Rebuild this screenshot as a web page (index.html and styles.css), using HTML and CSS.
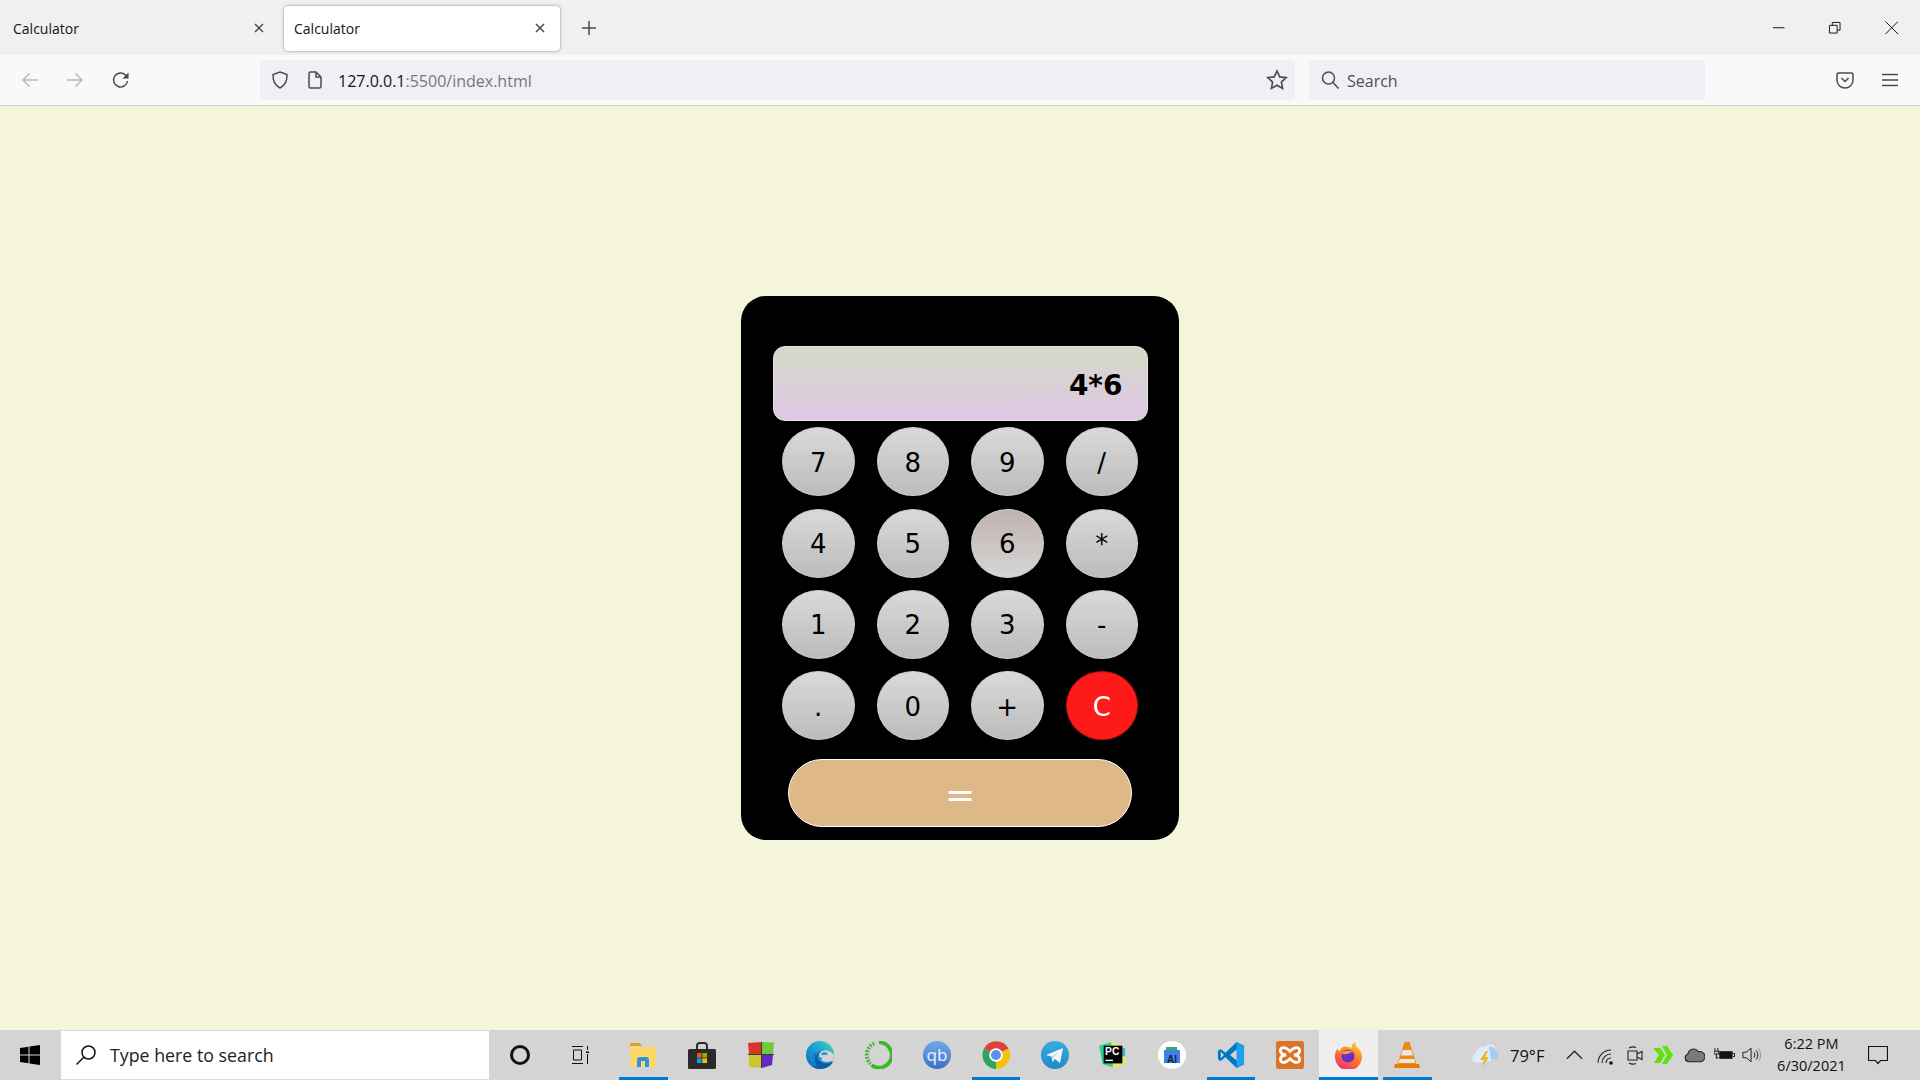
FILE: index.html
```html
<!DOCTYPE html>
<html lang="en">
<head>
  <meta charset="UTF-8">
  <meta name="viewport" content="width=device-width, initial-scale=1.0">
  <title>Calculator</title>
  <link rel="stylesheet" href="styles.css">
</head>
<body>
  <div class="tabbar">
    <div class="tab">
      <span class="tab-title">Calculator</span>
      <svg class="tab-close" viewBox="0 0 12 12"><path d="M2 2l8 8M10 2l-8 8"/></svg>
    </div>
    <div class="tab active">
      <span class="tab-title">Calculator</span>
      <svg class="tab-close" viewBox="0 0 12 12"><path d="M2 2l8 8M10 2l-8 8"/></svg>
    </div>
    <svg class="new-tab" viewBox="0 0 16 16"><path d="M8 1v14M1 8h14"/></svg>
    <div class="window-controls">
      <svg viewBox="0 0 14 14"><path d="M1 7h12"/></svg>
      <svg viewBox="0 0 14 14"><path d="M1.5 4.5h8v8h-8zM4.5 4.5v-3h8v8h-3"/></svg>
      <svg viewBox="0 0 14 14"><path d="M.5.5l13 13M13.5.5l-13 13"/></svg>
    </div>
  </div>

  <div class="toolbar">
    <div class="nav-btn faded"><svg viewBox="0 0 20 20"><path d="M18 10H3M9.5 3.5L3 10l6.500 6.500"/></svg></div>
    <div class="nav-btn faded"><svg viewBox="0 0 20 20"><path d="M2 10h15M10.500 3.500L17 10l-6.500 6.500"/></svg></div>
    <div class="nav-btn reload"><svg viewBox="0 0 20 20"><path d="M16.500 11a7 7 0 1 1-2-6l2.500 2.500"/><path class="solid" d="M17.500 2.500v6h-6z"/></svg></div>
    <div class="urlbar">
      <svg class="shield" viewBox="0 0 20 20"><path d="M10 2l7 2.500c.3 6.500-2 11-7 13.500-5-2.500-7.300-7-7-13.500z"/></svg>
      <svg class="page-icon" viewBox="0 0 16 20"><path d="M2 3.500A1.500 1.500 0 0 1 3.500 2H9l5 5v9.500a1.500 1.500 0 0 1-1.500 1.500h-9A1.500 1.500 0 0 1 2 16.500zM9 2v5h5"/></svg>
      <span class="url"><span class="url-host">127.0.0.1</span>:5500/index.html</span>
      <svg class="star" viewBox="0 0 20 20"><path d="M10 1.800l2.500 5.400 5.800.7-4.300 4 1.100 5.800-5.100-2.900-5.100 2.900 1.100-5.800-4.300-4 5.800-.7z"/></svg>
    </div>
    <div class="searchbar">
      <svg class="search-icon" viewBox="0 0 20 20"><circle cx="8.500" cy="8" r="6"/><path d="M13 12.500l5.500 6"/></svg>
      <span>Search</span>
    </div>
    <svg class="pocket" viewBox="0 0 20 20"><path d="M2 4.500A1.500 1.500 0 0 1 3.500 3h13A1.500 1.500 0 0 1 18 4.500V10a8 8 0 0 1-16 0z"/><path d="M6.500 8l3.500 3.500L13.500 8"/></svg>
    <svg class="menu" viewBox="0 0 18 16"><path d="M1 2.500h16M1 8h16M1 13.500h16"/></svg>
  </div>

  <div class="page">
    <div class="calculator">
      <div class="display">4*6</div>
      <div class="keys">
        <button class="key">7</button>
        <button class="key">8</button>
        <button class="key">9</button>
        <button class="key">/</button>
        <button class="key">4</button>
        <button class="key">5</button>
        <button class="key hover">6</button>
        <button class="key">*</button>
        <button class="key">1</button>
        <button class="key">2</button>
        <button class="key">3</button>
        <button class="key">-</button>
        <button class="key">.</button>
        <button class="key">0</button>
        <button class="key">+</button>
        <button class="key clear">C</button>
      </div>
      <button class="equals">=</button>
    </div>
  </div>

  <div class="taskbar">
    <div class="start">
      <svg viewBox="0 0 20 20"><path d="M0 3l8.500-1.200V9.500H0zM9.500 1.600L20 0v9.500H9.500zM0 10.500h8.500v7.700L0 17zM9.500 10.500H20V20L9.500 18.400z"/></svg>
    </div>
    <div class="task-search">
      <svg viewBox="0 0 22 22"><circle cx="13.500" cy="8.500" r="6.500"/><path d="M8.800 13.200L1.500 20.500"/></svg>
      <span>Type here to search</span>
    </div>
    <div class="cortana"><div class="cortana-ring"></div></div>
    <div class="taskview">
      <svg viewBox="0 0 20 20"><path d="M2 1.500h11M2 18.500h11M3.500 5h8v10h-8zM17.500 1v4M17.500 9v10"/><path class="dot" d="M17.500 6.500v1.500"/></svg>
    </div>

    <div class="apps">
      <div class="app running">
        <svg viewBox="0 0 28 28">
          <path d="M1 3.500A1.500 1.500 0 0 1 2.500 2h8l3 3H1z" fill="#e0a30e"/>
          <path d="M1 6h26v19a1 1 0 0 1-1 1H2a1 1 0 0 1-1-1z" fill="#fdd868"/>
          <path d="M8 26v-7a3 3 0 0 1 3-3h6a3 3 0 0 1 3 3v7h-4v-6h-4v6z" fill="#2f94dc"/>
        </svg>
      </div>
      <div class="app">
        <svg viewBox="0 0 28 28">
          <path d="M9 9V5a3 3 0 0 1 3-3h4a3 3 0 0 1 3 3v4" fill="none" stroke="#2b2b2b" stroke-width="2"/>
          <rect x="0" y="8" width="28" height="20" rx="1.500" fill="#2b2b2b"/>
          <rect x="9" y="12" width="4.600" height="4.600" fill="#f25022"/>
          <rect x="14.400" y="12" width="4.600" height="4.600" fill="#7fba00"/>
          <rect x="9" y="17.400" width="4.600" height="4.600" fill="#00a4ef"/>
          <rect x="14.400" y="17.400" width="4.600" height="4.600" fill="#ffb900"/>
        </svg>
      </div>
      <div class="app">
        <svg viewBox="0 0 28 28">
          <path d="M1 2l13-1v12H2z" fill="#d8362a"/>
          <path d="M15 1l12 .5-1 12H15z" fill="#6ecb3c"/>
          <path d="M2 14h12v13l-12-1z" fill="#c8c832"/>
          <path d="M15 14h11l-1 10-10 3z" fill="#6428c8"/>
          <path d="M14 1h1v26h-1zM1 13h26v1H1z" fill="#3a3a32"/>
        </svg>
      </div>
      <div class="app">
        <svg viewBox="0 0 30 30">
          <defs>
            <linearGradient id="edge-top" x1="0" y1="1" x2="1" y2="0">
              <stop offset="0" stop-color="#0c66c2"/>
              <stop offset=".6" stop-color="#1fa8d8"/>
              <stop offset="1" stop-color="#4fdf90"/>
            </linearGradient>
          </defs>
          <circle cx="15" cy="15" r="15" fill="url(#edge-top)"/>
          <path d="M30 17c-1-5-5-7-10-7-6 0-8 3-8 6 0 5 5 8 10 8 3 0 5-1 7-2-2 5-8 8-14 8-3 0-6-1-8-3 2 1 4 0 5-1-3-3-4-9 0-13-2 0-3 1-4 2" fill="#0f5aa8"/>
          <path d="M30 15.500c-1-3-5-5.500-9-5.500-4 0-7 2-7 5 0 2 1 3 3 3 1 1 0 2-1 2 3 3 9 3 13 .5z" fill="#d4d4d4"/>
          <path d="M16 14c1-2 5-3 7-1 1 1 0 2-3 2h-3z" fill="#1e9fd8"/>
        </svg>
      </div>
      <div class="app">
        <svg viewBox="0 0 30 30">
          <path d="M16 1.500a13.500 13.500 0 1 1-8 24.300" fill="none" stroke="#3fb52d" stroke-width="4"/>
          <path d="M11 2.500a13.500 13.500 0 0 0-4 22" fill="none" stroke="#3fb52d" stroke-width="4" stroke-dasharray="2 1.500"/>
        </svg>
      </div>
      <div class="app">
        <svg viewBox="0 0 28 28">
          <defs>
            <linearGradient id="qb-fill" x1="0" y1="0" x2="0" y2="1">
              <stop offset="0" stop-color="#73a8ec"/>
              <stop offset="1" stop-color="#3a70c8"/>
            </linearGradient>
          </defs>
          <circle cx="14" cy="14" r="14" fill="url(#qb-fill)"/>
          <text class="qb-text" x="14" y="19.500" text-anchor="middle">qb</text>
        </svg>
      </div>
      <div class="app running">
        <svg viewBox="0 0 28 28">
          <path d="M14 14L2 7.500A14 14 0 0 1 26.500 7.500z" fill="#db4437"/>
          <path d="M14 14l12.500-6.500A14 14 0 0 1 14 28z" fill="#f4c20d"/>
          <path d="M14 14v14A14 14 0 0 1 2 7.500z" fill="#2fa45c"/>
          <circle cx="14" cy="14" r="6.800" fill="#fff"/>
          <circle cx="14" cy="14" r="5" fill="#5b8ff0"/>
        </svg>
      </div>
      <div class="app">
        <svg viewBox="0 0 28 28">
          <defs>
            <linearGradient id="tg-fill" x1="0" y1="0" x2="0" y2="1">
              <stop offset="0" stop-color="#37aee2"/>
              <stop offset="1" stop-color="#1e88c8"/>
            </linearGradient>
          </defs>
          <circle cx="14" cy="14" r="14" fill="url(#tg-fill)"/>
          <path d="M5 14l17-7-3 15-5-4-2.500 3-1-5.500z" fill="#f2f7fb"/>
          <path d="M10.500 15.500l8-5-6 6-.5 3.500z" fill="#c4dcec"/>
        </svg>
      </div>
      <div class="app">
        <svg viewBox="0 0 30 30">
          <path d="M0 5l13-4 2 27-11-3z" fill="#2ed48c"/>
          <path d="M14 1l12 5 3 18-14 5z" fill="#e8ee50"/>
          <path d="M22 5l6 3v8l-6 1z" fill="#30b8e0"/>
          <rect x="5" y="5" width="20" height="19" fill="#000"/>
          <text class="pc-text" x="6.500" y="15.500">PC</text>
          <rect x="7" y="20" width="8" height="1.500" fill="#fff"/>
        </svg>
      </div>
      <div class="app">
        <svg viewBox="0 0 28 28">
          <circle cx="14" cy="14" r="14" fill="#fff"/>
          <path d="M8 6h11v4H8z" fill="#3aa870"/>
          <path d="M6 9h16v13H6z" fill="#3f80e8"/>
          <text class="ai-text" x="14" y="21.500" text-anchor="middle">AI</text>
        </svg>
      </div>
      <div class="app running">
        <svg viewBox="0 0 30 30">
          <path d="M21 1l8 4v20l-8 4-12-11.500-5 4-3-2v-9l3-2 5 4z" fill="#0078c8"/>
          <path d="M21 1l8 4v20l-8 4z" fill="#22a0ea"/>
          <path d="M21 9l-7 6 7 6z" fill="#d4d4d4"/>
          <path d="M4 11.500L7.500 15 4 18.500z" fill="#d4d4d4"/>
        </svg>
      </div>
      <div class="app">
        <svg viewBox="0 0 30 30">
          <rect width="30" height="30" rx="3" fill="#dc7428"/>
          <path d="M8 7c3 0 5 2 7 4 2-2 4-4 7-4s4 3 3 5-3 3-6 3c3 0 5 1 6 3s0 5-3 5-5-2-7-4c-2 2-4 4-7 4s-4-3-3-5 3-3 6-3c-3 0-5-1-6-3s0-5 3-5z" fill="none" stroke="#fff" stroke-width="3"/>
        </svg>
      </div>
      <div class="app running active">
        <svg viewBox="0 0 30 30">
          <defs>
            <linearGradient id="ff-body" x1=".8" y1="0" x2=".3" y2="1">
              <stop offset="0" stop-color="#ffd430"/>
              <stop offset=".5" stop-color="#ff7a20"/>
              <stop offset="1" stop-color="#f0307a"/>
            </linearGradient>
          </defs>
          <path d="M22 1c2 3 1 4 3 6 3 3 5 6 5 10a14.500 14.500 0 0 1-29 0c0-4 1-7 3-9 0 2 1 3 2 3 1-3 4-5 6-5 4 0 5 1 7 2-1-3 1-5 3-7z" fill="url(#ff-body)"/>
          <circle cx="15" cy="16" r="7" fill="#6a30c8"/>
          <path d="M8 13c3-3 9-4 13-1-2 0-4 0-5 1.500-3 1-6 1-8-.5z" fill="#ff9a30"/>
        </svg>
      </div>
      <div class="app running">
        <svg viewBox="0 0 26 28">
          <path d="M10.500 1h5l7 22h-19z" fill="#f08a10"/>
          <path d="M8.700 9h8.600l1.600 5.500H7z" fill="#e8e8e8"/>
          <path d="M5.800 18h14.400l1.200 4H4.600z" fill="#e8e8e8"/>
          <path d="M1 23h24l1 3a1 1 0 0 1-1 1H1a1 1 0 0 1-1-1z" fill="#e87c08"/>
        </svg>
      </div>
    </div>

    <div class="tray">
      <svg class="tray-weather" viewBox="0 0 28 26">
        <path d="M6 21a5 5 0 0 1-1-9.800 7 7 0 0 1 9-6 6 6 0 0 1 11 3.500 5 5 0 0 1-2 9.300z" fill="#dcecfa"/>
        <path d="M18 5a6 6 0 0 1 7 3.500 5 5 0 0 1-2 9.300h-3z" fill="#a8ccf0"/>
        <path d="M15 9l-6 9h4l-2 7 7-10h-4l3-6z" fill="#f4b020"/>
      </svg>
      <span class="tray-temp">79°F</span>
      <svg class="tray-caret" viewBox="0 0 18 10"><path d="M1 9l8-8 8 8"/></svg>
      <svg class="tray-icon tray-wifi" viewBox="0 0 20 20"><path d="M3 18a13 13 0 0 1 13-13M7 18a9 9 0 0 1 9-9M11 18a5 5 0 0 1 5-5"/><circle class="dot-fill" cx="16" cy="18" r="1.800"/></svg>
      <svg class="tray-icon tray-meet" viewBox="0 0 20 20"><path d="M3 6h9v9H3zM12 9l5-2.500v8L12 12zM4 3a8 8 0 0 1 7-.5M4 18a8 8 0 0 0 7 .5"/></svg>
      <svg class="tray-icon tray-chevrons" viewBox="0 0 20 20"><path class="chevrons" d="M0 3h7l5 7-5 8H1l5-8zM9 1h5l6 9-6 9H9l5-9z"/></svg>
      <svg class="tray-icon tray-cloud" viewBox="0 0 22 16"><path d="M5 15a4 4 0 0 1-1-7.800A6 6 0 0 1 15 4.500 5 5 0 0 1 18 15z"/></svg>
      <svg class="tray-icon tray-battery" viewBox="0 0 22 16"><path d="M1 1v3M4 1v3M0 4h5v3H0zM2.500 7v4h2"/><rect class="dot-fill" x="5.500" y="4" width="14" height="8"/><path d="M20 6.500h1.500v3H20"/></svg>
      <svg class="tray-icon tray-sound" viewBox="0 0 22 20"><path d="M1 7h3.500L10 2.500v15L4.500 13H1zM13 7a4.500 4.500 0 0 1 0 6M15.500 5a8 8 0 0 1 0 10"/><path class="wave" d="M18 3a11 11 0 0 1 0 14"/></svg>
      <div class="clock">
        <span>6:22 PM</span>
        <span>6/30/2021</span>
      </div>
      <svg class="tray-note" viewBox="0 0 20 20"><path d="M.5 1.500h19v14h-7l-2.500 3-2.500-3h-7z"/></svg>
    </div>
  </div>
</body>
</html>
```

FILE: styles.css
```css
* {
  box-sizing: border-box;
}

body {
  margin: 0;
  height: 1080px;
  overflow: hidden;
  display: flex;
  flex-direction: column;
  background-color: beige;
  font-family: "Open Sans", "Noto Sans", sans-serif;
  color: #15141a;
}

svg {
  display: block;
  flex-shrink: 0;
}

.tabbar svg,
.toolbar svg {
  fill: none;
  stroke: #4a4a50;
  stroke-width: 1.5;
}

/* browser tabs */
.tabbar {
  height: 55px;
  display: flex;
  align-items: center;
  background-color: #f0f0f0;
}

.tab {
  width: 284px;
  height: 45px;
  margin-top: 1px;
  padding: 0 19px 0 13px;
  display: flex;
  align-items: center;
  justify-content: space-between;
  font-size: 14px;
}

.tab.active {
  width: 276px;
  padding: 0 14px 0 10px;
  border-radius: 4px;
  background-color: white;
  box-shadow: 0 0 3px rgba(0, 0, 0, 0.45);
}

.tab-close {
  width: 12px;
  height: 12px;
}

.new-tab {
  width: 16px;
  height: 16px;
  margin-left: 20.500px;
}

.window-controls {
  margin-left: auto;
  margin-right: 22px;
  display: flex;
  gap: 43px;

  svg {
    width: 13.500px;
    height: 13.500px;
    stroke: #111;
    stroke-width: 1;
  }
}

/* address bar row */
.toolbar {
  height: 51px;
  padding: 0 0 1px 7px;
  display: flex;
  align-items: center;
  background-color: #f9f9fb;
  border-bottom: 1px solid #d4d4cc;
}

.nav-btn {
  width: 45px;
  display: flex;
  justify-content: center;

  svg {
    width: 20px;
    height: 20px;
  }
  .solid {
    fill: #4a4a50;
    stroke: none;
  }
}

.nav-btn.faded svg {
  stroke: #b8b8bc;
}

.nav-btn.reload {
  margin-left: 1px;
}

.urlbar {
  width: 1035px;
  height: 40px;
  margin-left: 117px;
  padding: 0 7px 0 10px;
  display: flex;
  align-items: center;
  border-radius: 4px;
  background-color: #f0f0f4;
}

.shield {
  width: 20px;
  height: 20px;
}

.page-icon {
  width: 16px;
  height: 20px;
  margin-left: 17px;
}

.url {
  margin-left: 15px;
  padding-top: 2px;
  font-size: 16px;
  color: #77767d;
}

.url-host {
  color: #15141a;
}

.star {
  width: 22px;
  height: 22px;
  margin-left: auto;
}

.searchbar {
  width: 396px;
  height: 40px;
  margin-left: 14px;
  padding-left: 11px;
  display: flex;
  align-items: center;
  gap: 7px;
  border-radius: 4px;
  background-color: #f0f0f4;
  font-size: 16px;
  color: #4f4e55;

  span {
    padding-top: 2px;
  }
}

.search-icon {
  width: 20px;
  height: 20px;
}

.pocket {
  width: 20px;
  height: 20px;
  margin-left: 130px;
}

.menu {
  width: 18px;
  height: 16px;
  margin-left: 26px;
}

/* the calculator */
.page {
  flex: 1;
  display: flex;
  align-items: center;
  justify-content: center;
}

.calculator {
  width: 438px;
  padding: 50px 0 13px;
  display: flex;
  flex-direction: column;
  align-items: center;
  border-radius: 25px;
  background-color: black;
  font-family: "DejaVu Sans", Verdana, sans-serif;
}

.display {
  width: 375px;
  height: 75px;
  padding: 3px 24px 0 0;
  display: flex;
  align-items: center;
  justify-content: flex-end;
  border: 1px solid #e4e4e0;
  border-radius: 12px;
  background: linear-gradient(#d3dbc4, #e0c6e8);
  color: black;
  font-size: 28px;
  font-weight: bold;
}

.keys {
  width: 356px;
  margin-top: 6.300px;
  display: grid;
  grid-template-columns: repeat(4, 72.500px);
  grid-auto-rows: 69px;
  column-gap: 22px;
  row-gap: 12.330px;
}

.key {
  padding: 2px 0 0;
  border: 1px solid #cfcfcf;
  border-radius: 50%;
  background: linear-gradient(#d9d9d9, #bcbcbc);
  color: black;
  font-family: inherit;
  font-size: 26px;
}

.key.hover {
  background: linear-gradient(#bfb2ae, #d6d6d6);
}

.key.clear {
  border-color: #c01010;
  background: #ff1a1a;
  color: white;
}

.equals {
  width: 344px;
  height: 68px;
  margin-top: 18.700px;
  padding: 4px 0 0;
  border: 1px solid white;
  border-radius: 34px;
  background-color: burlywood;
  color: white;
  font-family: inherit;
  font-size: 36px;
}

/* windows taskbar */
.taskbar {
  height: 50px;
  display: flex;
  align-items: center;
  background-color: #d4d4d4;
}

.start {
  width: 60px;
  display: flex;
  justify-content: center;

  svg {
    width: 20px;
    height: 20px;
    fill: black;
  }
}

.task-search {
  width: 428px;
  height: 50px;
  margin-left: 1px;
  padding-left: 14px;
  display: flex;
  align-items: center;
  gap: 13px;
  background-color: white;
  border: 1px solid #dcdcdc;
  border-width: 1px 0;
  font-size: 17.800px;
  color: #222;

  svg {
    width: 22px;
    height: 22px;
    fill: none;
    stroke: #111;
    stroke-width: 1.500;
  }
}

.cortana {
  width: 61px;
  display: flex;
  justify-content: center;
}

.cortana-ring {
  width: 20px;
  height: 20px;
  border: 3px solid #111;
  border-radius: 50%;
}

.taskview {
  width: 60px;
  display: flex;
  justify-content: center;

  svg {
    width: 20px;
    height: 20px;
    fill: none;
    stroke: #111;
    stroke-width: 1;
  }
  .dot {
    stroke-width: 3;
  }
}

.apps {
  width: 822.500px;
  margin-left: 4px;
  display: flex;
  align-self: stretch;
}

.app {
  position: relative;
  width: 58.750px;
  display: flex;
  align-items: center;
  justify-content: center;

  svg {
    width: 28px;
    height: 28px;
  }
}

.app.running::after {
  content: "";
  position: absolute;
  left: 5px;
  right: 5px;
  bottom: 0;
  height: 3px;
  background-color: #0078d4;
}

.app.active {
  background-color: #eeeeee;
}

.app.active::after {
  left: 0;
  right: 0;
}

.qb-text {
  font-family: "Noto Sans", sans-serif;
  font-size: 17px;
  fill: #e8f0fc;
}

.pc-text {
  font-family: "Liberation Sans", sans-serif;
  font-size: 11px;
  font-weight: bold;
  fill: white;
}

.ai-text {
  font-family: "Liberation Sans", sans-serif;
  font-size: 10px;
  font-weight: bold;
  fill: #14213a;
}

/* system tray */
.tray {
  flex: 1;
  padding-left: 34.500px;
  display: flex;
  align-items: center;
  color: #111;
}

.tray-weather {
  width: 28px;
  height: 26px;
}

.tray-temp {
  margin-left: 11px;
  font-size: 16.500px;
}

.tray-caret {
  width: 17px;
  height: 10px;
  margin-left: 21.500px;
  fill: none;
  stroke: #222;
  stroke-width: 1.300;
}

.tray-icon {
  width: 20px;
  height: 20px;
  fill: none;
  stroke: #222;
  stroke-width: 1.100;

  .dot-fill {
    fill: #111;
    stroke: none;
  }
  .chevrons {
    fill: #5fe010;
    stroke: none;
  }
  .wave {
    stroke: #999;
  }
}

.tray-wifi {
  margin-left: 12.500px;
}

.tray-meet {
  margin-left: 10px;
}

.tray-chevrons {
  margin-left: 8px;
}

.tray-cloud {
  width: 21px;
  margin-left: 10.500px;
  fill: #7a7a7a;
  stroke: #222;
}

.tray-battery {
  width: 21px;
  margin-left: 9px;
}

.tray-sound {
  margin-left: 7.500px;
}

.clock {
  width: 84px;
  margin-left: 7px;
  display: flex;
  flex-direction: column;
  align-items: center;
  gap: 2px;
  font-size: 14.500px;
  line-height: 20px;
}

.tray-note {
  width: 20px;
  height: 20px;
  margin-left: 15px;
  fill: none;
  stroke: #111;
  stroke-width: 1.200;
}
```
